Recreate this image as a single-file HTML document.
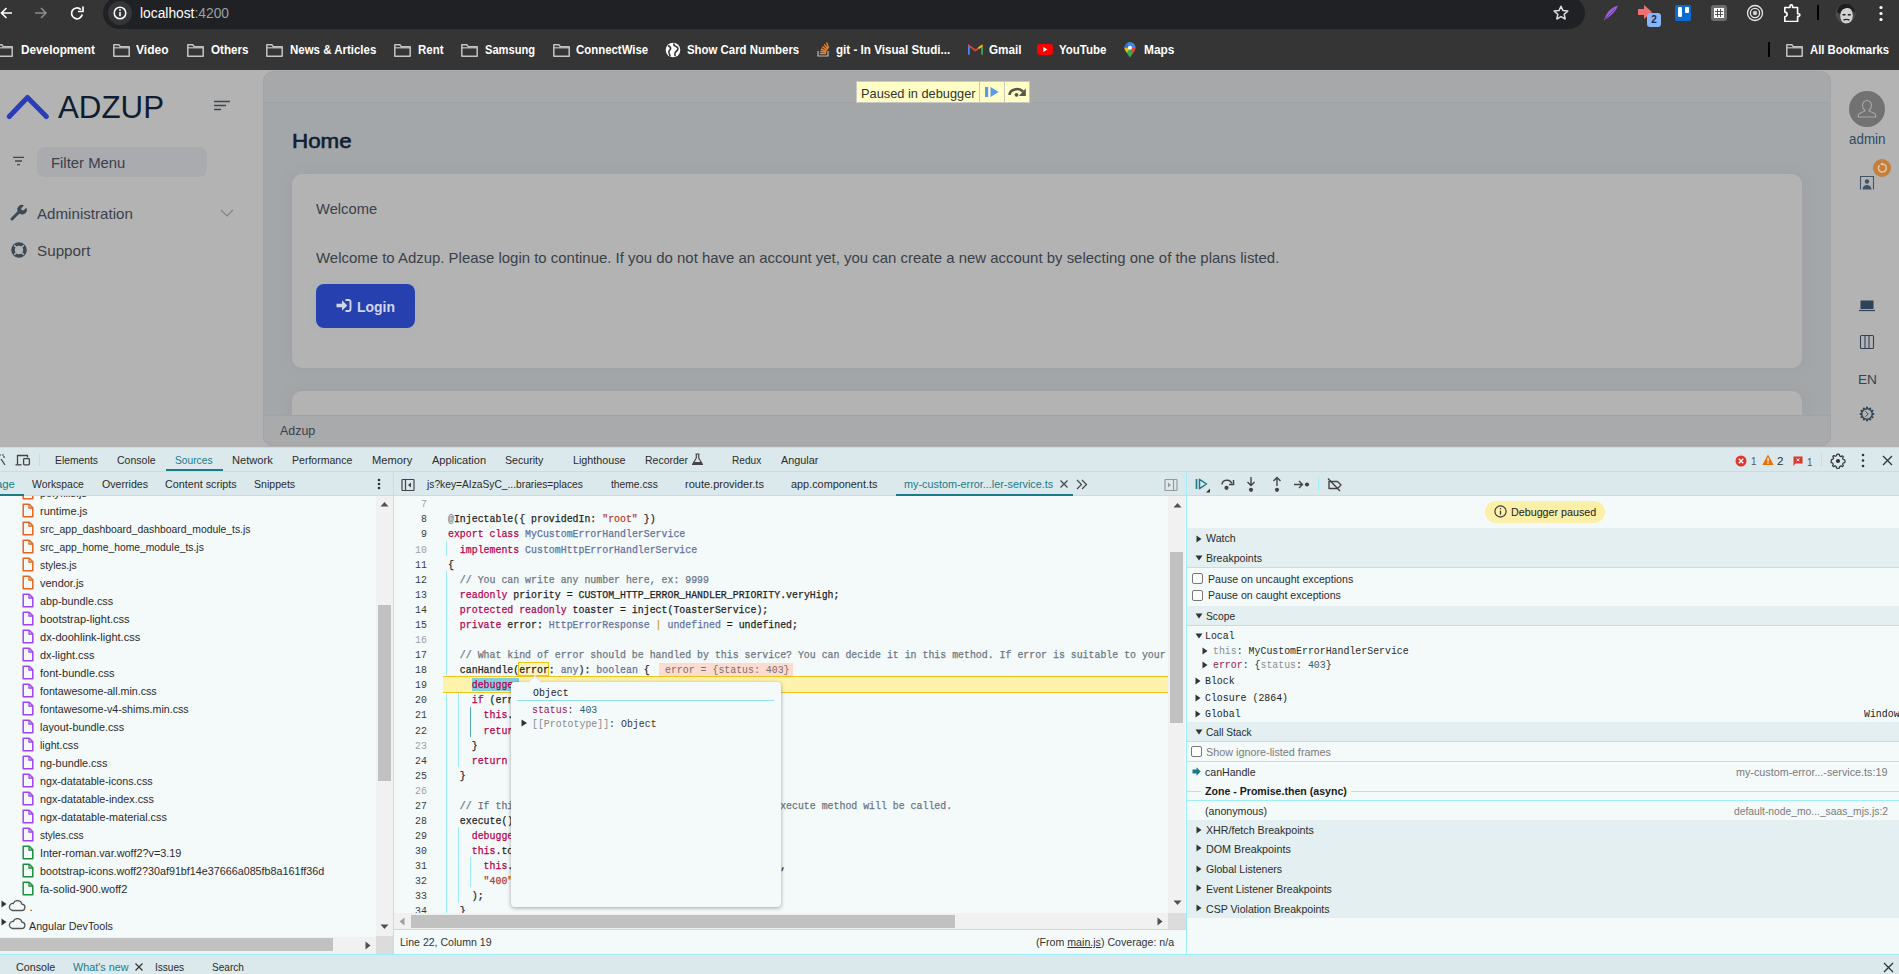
<!DOCTYPE html>
<html><head><meta charset="utf-8">
<style>
*{box-sizing:border-box;margin:0;padding:0}
html,body{width:1899px;height:974px;overflow:hidden;background:#353535;font-family:"Liberation Sans",sans-serif;position:relative}
.a{position:absolute}
.t{position:absolute;white-space:nowrap;line-height:1}
</style></head>
<body>
<div id="chrome" class="a">
<svg class="a" style="left:0px;top:6px" width="14" height="14" viewBox="0 0 14 14"><path d="M12 7H1.5M6.5 2L1.5 7l5 5" stroke="#fff" stroke-width="1.6" fill="none"/></svg>
<svg class="a" style="left:34px;top:6px" width="14" height="14" viewBox="0 0 14 14"><path d="M1 7h10.5M7 2l5 5-5 5" stroke="#8a8a8a" stroke-width="1.6" fill="none"/></svg>
<svg class="a" style="left:70px;top:5px" width="15" height="16" viewBox="0 0 15 16"><path d="M12.2 9.5A5.4 5.4 0 1 1 10.8 4.6" stroke="#fff" stroke-width="1.7" fill="none"/><path d="M13 1.5v5h-5" stroke="#fff" stroke-width="1.7" fill="none"/></svg>
<div class="a" style="left:103px;top:-3px;width:1482px;height:32px;background:#202124;border-radius:16px"></div>
<div class="a" style="left:108px;top:1px;width:24px;height:24px;border-radius:12px;background:#353638"></div>
<svg class="a" style="left:113px;top:6px" width="14" height="14" viewBox="0 0 14 14"><circle cx="7" cy="7" r="5.8" stroke="#fff" stroke-width="1.5" fill="none"/><path d="M7 6v4.2" stroke="#fff" stroke-width="1.6"/><circle cx="7" cy="4" r="0.9" fill="#fff"/></svg>
<div class="t" style="left:139.5px;top:6.0px;font-size:14px;color:#fff;transform:scaleX(0.9855);transform-origin:0 0">localhost<span style="color:#9aa0a6">:4200</span></div>
<svg class="a" style="left:1552px;top:4px" width="18" height="18" viewBox="0 0 18 18"><path d="M9 2.2l2 4.4 4.8.5-3.6 3.2 1 4.7L9 12.6 4.8 15l1-4.7L2.2 7.1 7 6.6z" stroke="#ddd" stroke-width="1.5" fill="none" stroke-linejoin="round"/></svg>
<svg class="a" style="left:1603px;top:5px" width="16" height="16" viewBox="0 0 16 16"><path d="M15 0.5C10 2 4 5 1 15.5 5 12 12 9 15 0.5z" fill="#9b5fd8"/><path d="M2 14L12 4" stroke="#6a3aa8" stroke-width="1"/></svg>
<svg class="a" style="left:1638px;top:5px" width="16" height="14" viewBox="0 0 16 14"><path d="M0 4h6V0l8 7-8 7V10H0z" fill="#f07070"/></svg>
<div class="a" style="left:1647px;top:13px;width:14px;height:14px;border-radius:3px;background:#8ab4f8;color:#1c2a4a;font-size:10px;font-weight:bold;text-align:center;line-height:14px">2</div>
<div class="a" style="left:1675px;top:5px;width:16px;height:16px;background:#0b6bd3;border-radius:2px"></div>
<div class="a" style="left:1678px;top:7px;width:4px;height:10px;background:#fff;border-radius:1px"></div>
<div class="a" style="left:1685px;top:7px;width:4px;height:6px;background:#fff;border-radius:1px"></div>
<div class="a" style="left:1711px;top:5px;width:16px;height:16px;background:#6e6e6e;border-radius:3px"></div>
<svg class="a" style="left:1713px;top:7px" width="12" height="12" viewBox="0 0 12 12"><rect x="1" y="1" width="10" height="10" fill="#fff"/><path d="M4.5 2v8M7.5 2v8M2 4.5h8M2 7.5h8" stroke="#555" stroke-width="1"/></svg>
<svg class="a" style="left:1746px;top:4px" width="18" height="18" viewBox="0 0 18 18"><circle cx="9" cy="9" r="7.5" stroke="#e8e8e8" stroke-width="1.3" fill="none"/><circle cx="9" cy="9" r="4.6" stroke="#e8e8e8" stroke-width="1.3" fill="none"/><circle cx="9" cy="9" r="2.2" fill="#cfcfcf"/></svg>
<svg class="a" style="left:1783px;top:3px" width="18" height="19" viewBox="0 0 18 19"><path d="M1.8 4.5h5.2V3.2a1.3 1.3 0 0 1 2.6 0V4.5h5v6.3h1a1.3 1.3 0 0 1 0 2.6h-1v5.1H1.8v-4.8a2.3 2.3 0 0 0 0-4.6z" stroke="#fff" stroke-width="1.6" fill="none" stroke-linejoin="round"/></svg>
<div class="a" style="left:1817px;top:5px;width:2px;height:15px;background:#000"></div>
<svg class="a" style="left:1835px;top:3px" width="21" height="21" viewBox="0 0 21 21"><clipPath id="av"><circle cx="10.5" cy="10.5" r="10"/></clipPath><g clip-path="url(#av)"><rect width="21" height="21" fill="#4a4a4a"/><ellipse cx="11.5" cy="12.5" rx="6.3" ry="8.5" fill="#d2d2d2"/><path d="M2 9C3 2 8 0 12 0.5s8 3 8 9l-2.5-1.5C16 5 13 4.5 10 5.5S6 8 5 11z" fill="#1e1e1e"/><path d="M7.5 11.8h3M12.8 11.8h3" stroke="#222" stroke-width="1.5"/><path d="M8.5 17.2c1.5-1 4.5-1 6 0" stroke="#2a2a2a" stroke-width="1.6" fill="none"/><path d="M2 2.5A10 10 0 0 0 3 18" stroke="#777" stroke-width="1.2" fill="none"/></g></svg>
<svg class="a" style="left:1877px;top:5px" width="8" height="17" viewBox="0 0 8 17"><circle cx="4" cy="2.5" r="1.6" fill="#fff"/><circle cx="4" cy="8.5" r="1.6" fill="#fff"/><circle cx="4" cy="14.5" r="1.6" fill="#fff"/></svg>
<svg class="a" style="left:-4px;top:44px" width="17" height="13" viewBox="0 0 17 13"><path d="M0.8 0.8h5l1.6 2h8.8v9.4H0.8z" stroke="#c4c4c4" stroke-width="1.5" fill="none" stroke-linejoin="round"/><path d="M0.8 3.8h15.4" stroke="#c4c4c4" stroke-width="1.2"/></svg>
<div class="t" style="left:20.6px;top:44.0px;font-size:12.5px;color:#fff;font-weight:bold;transform:scaleX(0.9427);transform-origin:0 0">Development</div>
<svg class="a" style="left:113px;top:44px" width="17" height="13" viewBox="0 0 17 13"><path d="M0.8 0.8h5l1.6 2h8.8v9.4H0.8z" stroke="#c4c4c4" stroke-width="1.5" fill="none" stroke-linejoin="round"/><path d="M0.8 3.8h15.4" stroke="#c4c4c4" stroke-width="1.2"/></svg>
<div class="t" style="left:136.4px;top:44.0px;font-size:12.5px;color:#fff;font-weight:bold;transform:scaleX(0.9641);transform-origin:0 0">Video</div>
<svg class="a" style="left:187px;top:44px" width="17" height="13" viewBox="0 0 17 13"><path d="M0.8 0.8h5l1.6 2h8.8v9.4H0.8z" stroke="#c4c4c4" stroke-width="1.5" fill="none" stroke-linejoin="round"/><path d="M0.8 3.8h15.4" stroke="#c4c4c4" stroke-width="1.2"/></svg>
<div class="t" style="left:210.5px;top:44.0px;font-size:12.5px;color:#fff;font-weight:bold;transform:scaleX(0.9306);transform-origin:0 0">Others</div>
<svg class="a" style="left:266px;top:44px" width="17" height="13" viewBox="0 0 17 13"><path d="M0.8 0.8h5l1.6 2h8.8v9.4H0.8z" stroke="#c4c4c4" stroke-width="1.5" fill="none" stroke-linejoin="round"/><path d="M0.8 3.8h15.4" stroke="#c4c4c4" stroke-width="1.2"/></svg>
<div class="t" style="left:289.7px;top:44.0px;font-size:12.5px;color:#fff;font-weight:bold;transform:scaleX(0.9178);transform-origin:0 0">News &amp; Articles</div>
<svg class="a" style="left:394px;top:44px" width="17" height="13" viewBox="0 0 17 13"><path d="M0.8 0.8h5l1.6 2h8.8v9.4H0.8z" stroke="#c4c4c4" stroke-width="1.5" fill="none" stroke-linejoin="round"/><path d="M0.8 3.8h15.4" stroke="#c4c4c4" stroke-width="1.2"/></svg>
<div class="t" style="left:417.8px;top:44.0px;font-size:12.5px;color:#fff;font-weight:bold;transform:scaleX(0.9179);transform-origin:0 0">Rent</div>
<svg class="a" style="left:461px;top:44px" width="17" height="13" viewBox="0 0 17 13"><path d="M0.8 0.8h5l1.6 2h8.8v9.4H0.8z" stroke="#c4c4c4" stroke-width="1.5" fill="none" stroke-linejoin="round"/><path d="M0.8 3.8h15.4" stroke="#c4c4c4" stroke-width="1.2"/></svg>
<div class="t" style="left:484.8px;top:44.0px;font-size:12.5px;color:#fff;font-weight:bold;transform:scaleX(0.8904);transform-origin:0 0">Samsung</div>
<svg class="a" style="left:553px;top:44px" width="17" height="13" viewBox="0 0 17 13"><path d="M0.8 0.8h5l1.6 2h8.8v9.4H0.8z" stroke="#c4c4c4" stroke-width="1.5" fill="none" stroke-linejoin="round"/><path d="M0.8 3.8h15.4" stroke="#c4c4c4" stroke-width="1.2"/></svg>
<div class="t" style="left:576.4px;top:44.0px;font-size:12.5px;color:#fff;font-weight:bold;transform:scaleX(0.9130);transform-origin:0 0">ConnectWise</div>
<svg class="a" style="left:665px;top:42px" width="16" height="16" viewBox="0 0 16 16"><circle cx="8" cy="8" r="7.3" fill="#fff"/><path d="M3 3.5c2 1 3 2 2.5 3.5S3 9 4 11s1 2.5 1 3.5M9 1.5c-.5 1.5.5 2.5 2 3s2.5 2 1.5 3.5-2 1.5-2.5 3 0 2.5.5 3" stroke="#353535" stroke-width="1.6" fill="none"/></svg>
<div class="t" style="left:686.9px;top:44.0px;font-size:12.5px;color:#fff;font-weight:bold;transform:scaleX(0.9127);transform-origin:0 0">Show Card Numbers</div>
<svg class="a" style="left:817px;top:42px" width="13" height="15" viewBox="0 0 13 15"><path d="M1 9v5h10V9" stroke="#bbb" stroke-width="1.2" fill="none"/><path d="M3 11.5h6M3.3 9.3l6 .8M4 7l5.6 2.2M5.3 4.6l5 3.4M7.2 2.4l3.8 4.6M9.6 0.6l2 5.4" stroke="#f48024" stroke-width="1.4"/></svg>
<div class="t" style="left:836.4px;top:44.0px;font-size:12.5px;color:#fff;font-weight:bold;transform:scaleX(0.9315);transform-origin:0 0">git - In Visual Studi...</div>
<svg class="a" style="left:968px;top:44px" width="15" height="11" viewBox="0 0 15 11"><path d="M0.8 10.5V1.5L7.5 6.5 14.2 1.5v9" stroke="#ea4335" stroke-width="1.6" fill="none"/><path d="M0.8 10.5V2" stroke="#4285f4" stroke-width="1.8"/><path d="M14.2 10.5V2" stroke="#34a853" stroke-width="1.8"/><path d="M10.5 4.3l3.7-2.8" stroke="#fbbc04" stroke-width="1.8"/></svg>
<div class="t" style="left:988.5px;top:44.0px;font-size:12.5px;color:#fff;font-weight:bold;transform:scaleX(0.9353);transform-origin:0 0">Gmail</div>
<svg class="a" style="left:1037px;top:44px" width="16" height="11" viewBox="0 0 16 11"><rect x="0" y="0" width="16" height="11" rx="3" fill="#f00"/><path d="M6.3 3v5l4.2-2.5z" fill="#fff"/></svg>
<div class="t" style="left:1058.5px;top:44.0px;font-size:12.5px;color:#fff;font-weight:bold;transform:scaleX(0.9201);transform-origin:0 0">YouTube</div>
<svg class="a" style="left:1124px;top:42px" width="12" height="16" viewBox="0 0 12 16"><path d="M6 15.5C3 11 0.5 8.5 0.5 5.7A5.5 5.5 0 0 1 11.5 5.7C11.5 8.5 9 11 6 15.5z" fill="#34a853"/><path d="M0.5 5.7A5.5 5.5 0 0 1 3 1.2L6 5.7z" fill="#1a73e8"/><path d="M3 1.2A5.5 5.5 0 0 1 11.5 5.7L6 5.7z" fill="#4285f4"/><path d="M0.5 5.7C0.5 7.5 1.5 9 3 10.5L6 5.7z" fill="#fbbc04"/><path d="M11.5 5.7c0 2-1.5 3.7-3 5.5L6 5.7z" fill="#ea4335"/><circle cx="6" cy="5.7" r="2" fill="#fff"/></svg>
<div class="t" style="left:1143.8px;top:44.0px;font-size:12.5px;color:#fff;font-weight:bold;transform:scaleX(0.9514);transform-origin:0 0">Maps</div>
<svg class="a" style="left:1786px;top:44px" width="17" height="13" viewBox="0 0 17 13"><path d="M0.8 0.8h5l1.6 2h8.8v9.4H0.8z" stroke="#c4c4c4" stroke-width="1.5" fill="none" stroke-linejoin="round"/><path d="M0.8 3.8h15.4" stroke="#c4c4c4" stroke-width="1.2"/></svg>
<div class="t" style="left:1809.9px;top:44.0px;font-size:12.5px;color:#fff;font-weight:bold;transform:scaleX(0.9037);transform-origin:0 0">All Bookmarks</div>
<div class="a" style="left:1768px;top:42px;width:2px;height:15px;background:#000"></div>
</div>
<div class="a" style="left:0px;top:70px;width:1899px;height:377px;background:#b3b3b3"></div>
<div class="a" style="left:263px;top:71px;width:1568px;height:375px;background:#a4a7a9;border-radius:10px;overflow:hidden;border:1px solid #a1a4a8"><div class="a" style="left:0px;top:0px;width:1568px;height:30px;background:#a7a8aa"></div>
<div class="a" style="left:0px;top:30px;width:1568px;height:1px;background:#a0a2a7"></div>
</div>
<div class="t" style="left:292.2px;top:130.6px;font-size:20.8px;color:#0f1e30;transform:scaleX(1.0742);transform-origin:0 0;-webkit-text-stroke:0.6px #0f1e30">Home</div>
<div class="a" style="left:292px;top:174px;width:1510px;height:194px;background:#b3b3b3;border-radius:10px;box-shadow:0 0 10px 2px rgba(158,161,164,0.9)"></div>
<div class="a" style="left:292px;top:391px;width:1510px;height:40px;background:#b3b3b3;border-radius:10px;box-shadow:0 0 10px 2px rgba(158,161,164,0.9)"></div>
<div class="a" style="left:263px;top:415px;width:1568px;height:31px;background:#a8aaac;border:1px solid #a1a4a8;border-top-color:#a0a2a6;border-radius:0 0 10px 10px"></div>
<div class="t" style="left:315.6px;top:202.2px;font-size:14.5px;color:#3a4149;transform:scaleX(1.0154);transform-origin:0 0">Welcome</div>
<div class="t" style="left:315.6px;top:251.3px;font-size:14.5px;color:#3a4149;transform:scaleX(1.0305);transform-origin:0 0">Welcome to Adzup. Please login to continue. If you do not have an account yet, you can create a new account by selecting one of the plans listed.</div>
<div class="a" style="left:316px;top:284px;width:99px;height:44px;background:#2640b0;border-radius:8px;box-shadow:0 0 0 6px rgba(175,177,179,0.6)"></div>
<svg class="a" style="left:336px;top:299px" width="16" height="13" viewBox="0 0 16 13"><path d="M0.5 4.7h5.5V1.2l5.3 5.3-5.3 5.3V8.3H0.5z" fill="#d2d6ea"/><path d="M9.5 1h3.2a1.8 1.8 0 0 1 1.8 1.8v7.4a1.8 1.8 0 0 1-1.8 1.8H9.5" stroke="#d2d6ea" stroke-width="1.9" fill="none"/></svg>
<div class="t" style="left:356.7px;top:298.8px;font-size:15px;color:#d2d6ea;font-weight:bold;transform:scaleX(0.9283);transform-origin:0 0">Login</div>
<div class="t" style="left:279.9px;top:424.3px;font-size:13px;color:#3a4149;transform:scaleX(0.9546);transform-origin:0 0">Adzup</div>
<svg class="a" style="left:6px;top:94px" width="44" height="27" viewBox="0 0 44 27"><path d="M3.3 22.5L21.5 3.5 40.3 22.5" stroke="#2b3cba" stroke-width="5" fill="none" stroke-linecap="round" stroke-linejoin="round"/></svg>
<div class="t" style="left:57.5px;top:92.0px;font-size:31.6px;color:#0e1d30;transform:scaleX(0.9899);transform-origin:0 0">ADZUP</div>
<svg class="a" style="left:213px;top:100px" width="18" height="12" viewBox="0 0 18 12"><path d="M1 1.5h16M1 5.5h12M1 9.5h7" stroke="#3d4750" stroke-width="1.6"/></svg>
<svg class="a" style="left:12px;top:156px" width="13" height="10" viewBox="0 0 13 10"><path d="M1 1.3h11M3 5h7M5 8.7h3" stroke="#3d4750" stroke-width="1.3"/></svg>
<div class="a" style="left:37px;top:147px;width:169.5px;height:29.5px;background:#a9abae;border-radius:8px"></div>
<div class="t" style="left:50.9px;top:155.9px;font-size:14.5px;color:#3a4149;transform:scaleX(1.0244);transform-origin:0 0">Filter Menu</div>
<svg class="a" style="left:10px;top:204px" width="17" height="17" viewBox="0 0 17 17"><path d="M2 15l6.5-6.5" stroke="#3d4a56" stroke-width="3" stroke-linecap="round"/><path d="M8.5 8.5a4.5 4.5 0 0 1 5.5-7l-2.8 2.8.4 1.8 1.8.4L16.2 3.7a4.5 4.5 0 0 1-7 5.5z" fill="#3d4a56"/></svg>
<div class="t" style="left:37.1px;top:207.3px;font-size:14.5px;color:#3a4149;transform:scaleX(1.0438);transform-origin:0 0">Administration</div>
<svg class="a" style="left:220px;top:209px" width="14" height="8" viewBox="0 0 14 8"><path d="M1 1l6 6 6-6" stroke="#7d8790" stroke-width="1.2" fill="none"/></svg>
<svg class="a" style="left:11px;top:242px" width="16" height="16" viewBox="0 0 16 16"><circle cx="8" cy="8" r="6" stroke="#3d4a56" stroke-width="3.6" fill="none"/><path d="M3.2 3.2l2.6 2.6M12.8 3.2l-2.6 2.6M3.2 12.8l2.6-2.6M12.8 12.8l-2.6-2.6" stroke="#b3b3b3" stroke-width="1.6"/></svg>
<div class="t" style="left:37.1px;top:244.2px;font-size:14.5px;color:#3a4149;transform:scaleX(1.0512);transform-origin:0 0">Support</div>
<div class="a" style="left:1849px;top:91px;width:36px;height:36px;background:#727272;border-radius:50%"></div>
<svg class="a" style="left:1855px;top:97px" width="24" height="24" viewBox="0 0 24 24"><path d="M12 3.5a4.5 5 0 0 1 4.5 5c0 2.2-1.2 4-2.5 4.8v.7l5.5 2.5a2 2 0 0 1 1.2 1.8V20H3.3v-1.7a2 2 0 0 1 1.2-1.8L10 14v-.7C8.7 12.5 7.5 10.7 7.5 8.5a4.5 5 0 0 1 4.5-5z" stroke="#a8a8a8" stroke-width="1.1" fill="none"/></svg>
<div class="t" style="left:1849.0px;top:132.4px;font-size:14px;color:#2f4a63;transform:scaleX(0.9570);transform-origin:0 0">admin</div>
<svg class="a" style="left:1858px;top:175px" width="18" height="16" viewBox="0 0 18 16"><path d="M2.5 14.5V1.5h13v13" stroke="#3f5466" stroke-width="1.1" fill="none"/><circle cx="9" cy="6.5" r="2.2" fill="#3f5466"/><path d="M4.5 14.5c0-3 2-4.5 4.5-4.5s4.5 1.5 4.5 4.5z" fill="#3f5466"/></svg>
<div class="a" style="left:1873px;top:159px;width:18px;height:18px;background:#c47f3a;border-radius:50%"></div>
<svg class="a" style="left:1876px;top:162px" width="12" height="12" viewBox="0 0 12 12"><path d="M3.5 3.2A4 4 0 1 0 6 2" stroke="#e8c8a8" stroke-width="1.4" fill="none"/><path d="M6.5 0.3L4.2 2.2 6.5 3.8" fill="#e8c8a8"/></svg>
<svg class="a" style="left:1859px;top:300px" width="16" height="12" viewBox="0 0 16 12"><rect x="1.5" y="0.5" width="13" height="8.5" fill="#2f4357"/><path d="M0 10.5h16" stroke="#2f4357" stroke-width="1.2"/></svg>
<svg class="a" style="left:1859px;top:334px" width="16" height="16" viewBox="0 0 16 16"><rect x="1.5" y="1.5" width="13" height="13" rx="1" stroke="#2f4357" stroke-width="1.1" fill="none"/><path d="M6 1.5v13M10 1.5v13" stroke="#2f4357" stroke-width="1.1"/></svg>
<div class="t" style="left:1857.5px;top:372.8px;font-size:13px;color:#2f4357;transform:scaleX(1.0519);transform-origin:0 0">EN</div>
<svg class="a" style="left:1859px;top:406px" width="16" height="16" viewBox="0 0 16 16"><circle cx="8" cy="8" r="5.3" stroke="#2f4357" stroke-width="1.5" fill="none"/><circle cx="14.40" cy="8.00" r="1.05" fill="#2f4357"/><circle cx="13.54" cy="11.20" r="1.05" fill="#2f4357"/><circle cx="11.20" cy="13.54" r="1.05" fill="#2f4357"/><circle cx="8.00" cy="14.40" r="1.05" fill="#2f4357"/><circle cx="4.80" cy="13.54" r="1.05" fill="#2f4357"/><circle cx="2.46" cy="11.20" r="1.05" fill="#2f4357"/><circle cx="1.60" cy="8.00" r="1.05" fill="#2f4357"/><circle cx="2.46" cy="4.80" r="1.05" fill="#2f4357"/><circle cx="4.80" cy="2.46" r="1.05" fill="#2f4357"/><circle cx="8.00" cy="1.60" r="1.05" fill="#2f4357"/><circle cx="11.20" cy="2.46" r="1.05" fill="#2f4357"/><circle cx="13.54" cy="4.80" r="1.05" fill="#2f4357"/><path d="M6.3 5.3L9.3 8 6.3 10.7" stroke="#2f4357" stroke-width="0.9" fill="none"/></svg>
<div class="a" style="left:856px;top:81px;width:174px;height:22px;background:#ffffc6;border:1px solid #c9c9c4"></div>
<div class="t" style="left:861.0px;top:86.8px;font-size:13px;color:#333;transform:scaleX(0.9839);transform-origin:0 0">Paused in debugger</div>
<div class="a" style="left:979px;top:82px;width:1px;height:20px;background:#c9c9c4"></div>
<div class="a" style="left:1004px;top:82px;width:1px;height:20px;background:#c9c9c4"></div>
<svg class="a" style="left:985px;top:86px" width="15" height="12" viewBox="0 0 15 12"><path d="M1.6 1v10" stroke="#5a9be8" stroke-width="3.2"/><path d="M5.5 1v10l8.3-5z" fill="#5a9be8"/></svg>
<svg class="a" style="left:1007px;top:86px" width="20" height="12" viewBox="0 0 20 12"><path d="M2.5 9A7.5 6 0 0 1 16 5.5" stroke="#56564a" stroke-width="2.6" fill="none"/><path d="M18.8 2.5v7.5h-7z" fill="#56564a"/><circle cx="9.5" cy="8.8" r="1.9" fill="#56564a"/></svg>
<div class="a" style="left:0px;top:447px;width:1899px;height:527px;background:#f4fafa"></div>
<div class="a" style="left:0px;top:447px;width:1899px;height:1px;background:#9eeefa"></div>
<div class="a" style="left:0px;top:448px;width:1899px;height:23px;background:#dbe9ec"></div>
<div class="a" style="left:0px;top:471px;width:1899px;height:1px;background:#9eeefa"></div>
<div class="a" style="left:0px;top:472px;width:1899px;height:23px;background:#dbe9ec"></div>
<div class="a" style="left:0px;top:495px;width:1899px;height:1px;background:#9eeefa"></div>
<svg class="a" style="left:0px;top:454px" width="6" height="12" viewBox="0 0 6 12"><path d="M-4 1h8v4M-4 1v9h4" stroke="#444" stroke-width="1.2" fill="none" stroke-dasharray="2 1"/><path d="M1 5l4 6" stroke="#444" stroke-width="1.3"/></svg>
<svg class="a" style="left:15px;top:454px" width="16" height="12" viewBox="0 0 16 12"><path d="M2.5 10.5V1.5h10v2" stroke="#444" stroke-width="1.3" fill="none"/><path d="M0.5 10.8h6" stroke="#444" stroke-width="1.3"/><rect x="8.6" y="4.6" width="5.8" height="6.3" rx="0.8" stroke="#444" stroke-width="1.3" fill="none"/></svg>
<div class="a" style="left:39px;top:453px;width:1px;height:13px;background:#9eeefa"></div>
<div class="t" style="left:54.8px;top:455.0px;font-size:11px;color:#2b2b2b;transform:scaleX(0.9376);transform-origin:0 0">Elements</div>
<div class="t" style="left:117.4px;top:455.0px;font-size:11px;color:#2b2b2b;transform:scaleX(0.9564);transform-origin:0 0">Console</div>
<div class="t" style="left:174.9px;top:455.0px;font-size:11px;color:#1b7b89;transform:scaleX(0.9292);transform-origin:0 0">Sources</div>
<div class="t" style="left:231.8px;top:455.0px;font-size:11px;color:#2b2b2b;transform:scaleX(1.0113);transform-origin:0 0">Network</div>
<div class="t" style="left:291.9px;top:455.0px;font-size:11px;color:#2b2b2b;transform:scaleX(0.9574);transform-origin:0 0">Performance</div>
<div class="t" style="left:372.2px;top:455.0px;font-size:11px;color:#2b2b2b;transform:scaleX(1.0117);transform-origin:0 0">Memory</div>
<div class="t" style="left:431.6px;top:455.0px;font-size:11px;color:#2b2b2b;transform:scaleX(1.0051);transform-origin:0 0">Application</div>
<div class="t" style="left:505.2px;top:455.0px;font-size:11px;color:#2b2b2b;transform:scaleX(0.9660);transform-origin:0 0">Security</div>
<div class="t" style="left:573.1px;top:455.0px;font-size:11px;color:#2b2b2b;transform:scaleX(0.9772);transform-origin:0 0">Lighthouse</div>
<div class="t" style="left:645.0px;top:455.0px;font-size:11px;color:#2b2b2b;transform:scaleX(0.9525);transform-origin:0 0">Recorder</div>
<div class="t" style="left:732.4px;top:455.0px;font-size:11px;color:#2b2b2b;transform:scaleX(0.9215);transform-origin:0 0">Redux</div>
<div class="t" style="left:781.1px;top:455.0px;font-size:11px;color:#2b2b2b;transform:scaleX(0.9862);transform-origin:0 0">Angular</div>
<div class="a" style="left:166px;top:469px;width:57px;height:2px;background:#1b7b89"></div>
<svg class="a" style="left:691px;top:453px" width="13" height="13" viewBox="0 0 13 13"><path d="M4.5 1h4M5.3 1v4L1.5 11.5h10L7.7 5V1" stroke="#444" stroke-width="1.2" fill="none" stroke-linejoin="round"/><path d="M3 9h7l1.5 2.5h-10z" fill="#444"/></svg>
<svg class="a" style="left:1735px;top:455px" width="12" height="12" viewBox="0 0 12 12"><circle cx="6" cy="6" r="5.5" fill="#dc362e"/><path d="M3.8 3.8l4.4 4.4M8.2 3.8L3.8 8.2" stroke="#fff" stroke-width="1.4"/></svg>
<div class="t" style="left:1750.5px;top:456.0px;font-size:11px;color:#555;transform:scaleX(0.8980);transform-origin:0 0">1</div>
<svg class="a" style="left:1762px;top:454px" width="12" height="12" viewBox="0 0 12 12"><path d="M6 0.5l5.7 10.5H0.3z" fill="#e8710a"/><path d="M6 4v3.5" stroke="#fff" stroke-width="1.3"/><circle cx="6" cy="9.1" r="0.75" fill="#fff"/></svg>
<div class="t" style="left:1776.5px;top:456.0px;font-size:11px;color:#333;transform:scaleX(1.0612);transform-origin:0 0">2</div>
<svg class="a" style="left:1793px;top:456px" width="10" height="11" viewBox="0 0 10 11"><path d="M0.5 0.5h9v7H2.5l-2 2.5z" fill="#dc362e"/><path d="M3.6 2.4l2.8 2.8M6.4 2.4L3.6 5.2" stroke="#fff" stroke-width="1"/></svg>
<div class="t" style="left:1806.5px;top:457.0px;font-size:11px;color:#555;transform:scaleX(0.8980);transform-origin:0 0">1</div>
<div class="a" style="left:1821px;top:453px;width:1px;height:14px;background:#9eeefa"></div>
<svg class="a" style="left:1830px;top:453px" width="16" height="16" viewBox="0 0 16 16"><path d="M8 1.2l1.3.2.4 1.6 1.2.6 1.5-.8 1 1-.8 1.5.6 1.2 1.6.4.2 1.4-.2 1.3-1.6.4-.6 1.2.8 1.5-1 1-1.5-.8-1.2.6-.4 1.6-1.3.2-1.4-.2-.4-1.6-1.2-.6-1.5.8-1-1 .8-1.5-.6-1.2-1.6-.4L1.2 8l.2-1.4 1.6-.4.6-1.2-.8-1.5 1-1 1.5.8 1.2-.6.4-1.6z" stroke="#333" stroke-width="1.2" fill="none" stroke-linejoin="round"/><circle cx="8" cy="8" r="2.1" fill="#333"/></svg>
<svg class="a" style="left:1860px;top:453px" width="6" height="15" viewBox="0 0 6 15"><circle cx="3" cy="2" r="1.3" fill="#333"/><circle cx="3" cy="7.5" r="1.3" fill="#333"/><circle cx="3" cy="13" r="1.3" fill="#333"/></svg>
<svg class="a" style="left:1881px;top:454px" width="13" height="13" viewBox="0 0 13 13"><path d="M2 2l9 9M11 2l-9 9" stroke="#333" stroke-width="1.3"/></svg>
<div class="t" style="left:-4.0px;top:478.8px;font-size:11px;color:#1b7b89;transform:scaleX(1.0294);transform-origin:0 0">age</div>
<div class="a" style="left:0px;top:494px;width:24px;height:2px;background:#1b7b89"></div>
<div class="t" style="left:32.2px;top:478.8px;font-size:11px;color:#2b2b2b;transform:scaleX(0.9466);transform-origin:0 0">Workspace</div>
<div class="t" style="left:101.9px;top:478.8px;font-size:11px;color:#2b2b2b;transform:scaleX(0.9667);transform-origin:0 0">Overrides</div>
<div class="t" style="left:165.0px;top:478.8px;font-size:11px;color:#2b2b2b;transform:scaleX(0.9772);transform-origin:0 0">Content scripts</div>
<div class="t" style="left:254.3px;top:478.8px;font-size:11px;color:#2b2b2b;transform:scaleX(0.9600);transform-origin:0 0">Snippets</div>
<svg class="a" style="left:376px;top:478px" width="6" height="12" viewBox="0 0 6 12"><circle cx="3" cy="2" r="1.3" fill="#333"/><circle cx="3" cy="6" r="1.3" fill="#333"/><circle cx="3" cy="10" r="1.3" fill="#333"/></svg>
<div class="a" style="left:393px;top:472px;width:1px;height:482px;background:#9eeefa"></div>
<div class="a" style="left:1186px;top:472px;width:1px;height:482px;background:#9eeefa"></div>
<svg class="a" style="left:401px;top:478px" width="14" height="14" viewBox="0 0 14 14"><rect x="1" y="1.5" width="12" height="11" rx="0.5" stroke="#444" stroke-width="1.2" fill="none"/><path d="M4.5 1.5v11" stroke="#444" stroke-width="1.2"/><path d="M10 4.5v5L7 7z" fill="#444"/></svg>
<div class="t" style="left:427.1px;top:479.0px;font-size:11px;color:#2b2b2b;transform:scaleX(0.9306);transform-origin:0 0">js?key=AIzaSyC_...braries=places</div>
<div class="t" style="left:610.7px;top:479.0px;font-size:11px;color:#2b2b2b;transform:scaleX(0.9334);transform-origin:0 0">theme.css</div>
<div class="t" style="left:684.8px;top:479.0px;font-size:11px;color:#2b2b2b;transform:scaleX(1.0003);transform-origin:0 0">route.provider.ts</div>
<div class="t" style="left:791.0px;top:479.0px;font-size:11px;color:#2b2b2b;transform:scaleX(0.9880);transform-origin:0 0">app.component.ts</div>
<div class="t" style="left:904.4px;top:479.0px;font-size:11px;color:#1b7b89;transform:scaleX(0.9843);transform-origin:0 0">my-custom-error...ler-service.ts</div>
<svg class="a" style="left:1059px;top:479px" width="10" height="10" viewBox="0 0 10 10"><path d="M1.5 1.5l7 7M8.5 1.5l-7 7" stroke="#444" stroke-width="1.2"/></svg>
<div class="a" style="left:896px;top:494px;width:177px;height:2px;background:#1b7b89"></div>
<svg class="a" style="left:1076px;top:479px" width="12" height="11" viewBox="0 0 12 11"><path d="M1 1l4.5 4.5L1 10M6 1l4.5 4.5L6 10" stroke="#444" stroke-width="1.2" fill="none"/></svg>
<svg class="a" style="left:1164px;top:478px" width="14" height="14" viewBox="0 0 14 14"><rect x="1" y="1.5" width="12" height="11" rx="0.5" stroke="#999" stroke-width="1.2" fill="none"/><path d="M9.5 1.5v11" stroke="#999" stroke-width="1.2"/><path d="M4 4.5v5L7 7z" fill="#999"/></svg>
<svg class="a" style="left:1194px;top:477px" width="18" height="16" viewBox="0 0 18 16"><path d="M2.5 2v10" stroke="#1b7b89" stroke-width="1.6"/><path d="M5.5 2.3v9.4L12.5 7z" stroke="#1b7b89" stroke-width="1.5" fill="none" stroke-linejoin="round"/><path d="M16 11.5v4h-4z" fill="#333"/></svg>
<svg class="a" style="left:1220px;top:477px" width="15" height="15" viewBox="0 0 15 15"><path d="M2 7.5a5 4.5 0 0 1 9.8-1" stroke="#444" stroke-width="1.5" fill="none"/><path d="M13.5 3v4.5H9" stroke="#444" stroke-width="1.5" fill="none"/><circle cx="6.5" cy="10.8" r="2.1" fill="#444"/></svg>
<svg class="a" style="left:1245px;top:476px" width="12" height="17" viewBox="0 0 12 17"><path d="M6 1v8M2.5 6l3.5 3.5L9.5 6" stroke="#444" stroke-width="1.4" fill="none"/><circle cx="6" cy="13.8" r="2.1" fill="#444"/></svg>
<svg class="a" style="left:1271px;top:476px" width="12" height="17" viewBox="0 0 12 17"><path d="M6 10V2M2.5 5L6 1.5 9.5 5" stroke="#444" stroke-width="1.4" fill="none"/><circle cx="6" cy="13.8" r="2.1" fill="#444"/></svg>
<svg class="a" style="left:1293px;top:479px" width="18" height="11" viewBox="0 0 18 11"><path d="M1 5.5h8M6 2l3.5 3.5L6 9" stroke="#444" stroke-width="1.4" fill="none"/><circle cx="14" cy="5.5" r="2.1" fill="#444"/></svg>
<div class="a" style="left:1318px;top:477px;width:1px;height:14px;background:#9eeefa"></div>
<svg class="a" style="left:1326px;top:477px" width="17" height="15" viewBox="0 0 17 15"><path d="M3 4.5h8.5l3.5 3.5-3.5 3.5H3z" stroke="#444" stroke-width="1.4" fill="none" stroke-linejoin="round"/><path d="M2 1.5l12 12.5" stroke="#444" stroke-width="1.4"/></svg>
<div class="a" style="left:0;top:496px;width:393px;height:441px;overflow:hidden">
<div class="a" style="left:0;top:-496px;width:393px;height:974px">
<svg class="a" style="left:22px;top:485px" width="12" height="15" viewBox="0 0 12 15"><path d="M1.2 1.2h6l3.6 3.6v9H1.2z" stroke="#e6661c" stroke-width="1.5" fill="none" stroke-linejoin="round"/><path d="M7 1.2v3.8h3.8" stroke="#e6661c" stroke-width="1.3" fill="none"/></svg>
<div class="t" style="left:39.9px;top:488.0px;font-size:11px;color:#2b2b2b">polyfills.js</div>
<svg class="a" style="left:22px;top:503px" width="12" height="15" viewBox="0 0 12 15"><path d="M1.2 1.2h6l3.6 3.6v9H1.2z" stroke="#e6661c" stroke-width="1.5" fill="none" stroke-linejoin="round"/><path d="M7 1.2v3.8h3.8" stroke="#e6661c" stroke-width="1.3" fill="none"/></svg>
<div class="t" style="left:39.9px;top:506.0px;font-size:11px;color:#2b2b2b;transform:scaleX(0.9961);transform-origin:0 0">runtime.js</div>
<svg class="a" style="left:22px;top:521px" width="12" height="15" viewBox="0 0 12 15"><path d="M1.2 1.2h6l3.6 3.6v9H1.2z" stroke="#e6661c" stroke-width="1.5" fill="none" stroke-linejoin="round"/><path d="M7 1.2v3.8h3.8" stroke="#e6661c" stroke-width="1.3" fill="none"/></svg>
<div class="t" style="left:39.9px;top:524.0px;font-size:11px;color:#2b2b2b;transform:scaleX(0.9430);transform-origin:0 0">src_app_dashboard_dashboard_module_ts.js</div>
<svg class="a" style="left:22px;top:539px" width="12" height="15" viewBox="0 0 12 15"><path d="M1.2 1.2h6l3.6 3.6v9H1.2z" stroke="#e6661c" stroke-width="1.5" fill="none" stroke-linejoin="round"/><path d="M7 1.2v3.8h3.8" stroke="#e6661c" stroke-width="1.3" fill="none"/></svg>
<div class="t" style="left:39.9px;top:542.0px;font-size:11px;color:#2b2b2b;transform:scaleX(0.9399);transform-origin:0 0">src_app_home_home_module_ts.js</div>
<svg class="a" style="left:22px;top:557px" width="12" height="15" viewBox="0 0 12 15"><path d="M1.2 1.2h6l3.6 3.6v9H1.2z" stroke="#e6661c" stroke-width="1.5" fill="none" stroke-linejoin="round"/><path d="M7 1.2v3.8h3.8" stroke="#e6661c" stroke-width="1.3" fill="none"/></svg>
<div class="t" style="left:39.9px;top:560.0px;font-size:11px;color:#2b2b2b;transform:scaleX(0.9355);transform-origin:0 0">styles.js</div>
<svg class="a" style="left:22px;top:575px" width="12" height="15" viewBox="0 0 12 15"><path d="M1.2 1.2h6l3.6 3.6v9H1.2z" stroke="#e6661c" stroke-width="1.5" fill="none" stroke-linejoin="round"/><path d="M7 1.2v3.8h3.8" stroke="#e6661c" stroke-width="1.3" fill="none"/></svg>
<div class="t" style="left:39.9px;top:578.0px;font-size:11px;color:#2b2b2b;transform:scaleX(0.9947);transform-origin:0 0">vendor.js</div>
<svg class="a" style="left:22px;top:593px" width="12" height="15" viewBox="0 0 12 15"><path d="M1.2 1.2h6l3.6 3.6v9H1.2z" stroke="#a142f4" stroke-width="1.5" fill="none" stroke-linejoin="round"/><path d="M7 1.2v3.8h3.8" stroke="#a142f4" stroke-width="1.3" fill="none"/></svg>
<div class="t" style="left:39.9px;top:596.0px;font-size:11px;color:#2b2b2b;transform:scaleX(0.9798);transform-origin:0 0">abp-bundle.css</div>
<svg class="a" style="left:22px;top:611px" width="12" height="15" viewBox="0 0 12 15"><path d="M1.2 1.2h6l3.6 3.6v9H1.2z" stroke="#a142f4" stroke-width="1.5" fill="none" stroke-linejoin="round"/><path d="M7 1.2v3.8h3.8" stroke="#a142f4" stroke-width="1.3" fill="none"/></svg>
<div class="t" style="left:39.9px;top:614.0px;font-size:11px;color:#2b2b2b;transform:scaleX(1.0037);transform-origin:0 0">bootstrap-light.css</div>
<svg class="a" style="left:22px;top:629px" width="12" height="15" viewBox="0 0 12 15"><path d="M1.2 1.2h6l3.6 3.6v9H1.2z" stroke="#a142f4" stroke-width="1.5" fill="none" stroke-linejoin="round"/><path d="M7 1.2v3.8h3.8" stroke="#a142f4" stroke-width="1.3" fill="none"/></svg>
<div class="t" style="left:39.9px;top:632.0px;font-size:11px;color:#2b2b2b;transform:scaleX(1.0065);transform-origin:0 0">dx-doohlink-light.css</div>
<svg class="a" style="left:22px;top:647px" width="12" height="15" viewBox="0 0 12 15"><path d="M1.2 1.2h6l3.6 3.6v9H1.2z" stroke="#a142f4" stroke-width="1.5" fill="none" stroke-linejoin="round"/><path d="M7 1.2v3.8h3.8" stroke="#a142f4" stroke-width="1.3" fill="none"/></svg>
<div class="t" style="left:39.9px;top:650.0px;font-size:11px;color:#2b2b2b;transform:scaleX(0.9885);transform-origin:0 0">dx-light.css</div>
<svg class="a" style="left:22px;top:665px" width="12" height="15" viewBox="0 0 12 15"><path d="M1.2 1.2h6l3.6 3.6v9H1.2z" stroke="#a142f4" stroke-width="1.5" fill="none" stroke-linejoin="round"/><path d="M7 1.2v3.8h3.8" stroke="#a142f4" stroke-width="1.3" fill="none"/></svg>
<div class="t" style="left:39.9px;top:668.0px;font-size:11px;color:#2b2b2b;transform:scaleX(0.9999);transform-origin:0 0">font-bundle.css</div>
<svg class="a" style="left:22px;top:683px" width="12" height="15" viewBox="0 0 12 15"><path d="M1.2 1.2h6l3.6 3.6v9H1.2z" stroke="#a142f4" stroke-width="1.5" fill="none" stroke-linejoin="round"/><path d="M7 1.2v3.8h3.8" stroke="#a142f4" stroke-width="1.3" fill="none"/></svg>
<div class="t" style="left:39.9px;top:686.0px;font-size:11px;color:#2b2b2b;transform:scaleX(0.9690);transform-origin:0 0">fontawesome-all.min.css</div>
<svg class="a" style="left:22px;top:701px" width="12" height="15" viewBox="0 0 12 15"><path d="M1.2 1.2h6l3.6 3.6v9H1.2z" stroke="#a142f4" stroke-width="1.5" fill="none" stroke-linejoin="round"/><path d="M7 1.2v3.8h3.8" stroke="#a142f4" stroke-width="1.3" fill="none"/></svg>
<div class="t" style="left:39.9px;top:704.0px;font-size:11px;color:#2b2b2b;transform:scaleX(0.9691);transform-origin:0 0">fontawesome-v4-shims.min.css</div>
<svg class="a" style="left:22px;top:719px" width="12" height="15" viewBox="0 0 12 15"><path d="M1.2 1.2h6l3.6 3.6v9H1.2z" stroke="#a142f4" stroke-width="1.5" fill="none" stroke-linejoin="round"/><path d="M7 1.2v3.8h3.8" stroke="#a142f4" stroke-width="1.3" fill="none"/></svg>
<div class="t" style="left:39.9px;top:722.0px;font-size:11px;color:#2b2b2b;transform:scaleX(0.9835);transform-origin:0 0">layout-bundle.css</div>
<svg class="a" style="left:22px;top:737px" width="12" height="15" viewBox="0 0 12 15"><path d="M1.2 1.2h6l3.6 3.6v9H1.2z" stroke="#a142f4" stroke-width="1.5" fill="none" stroke-linejoin="round"/><path d="M7 1.2v3.8h3.8" stroke="#a142f4" stroke-width="1.3" fill="none"/></svg>
<div class="t" style="left:39.9px;top:740.0px;font-size:11px;color:#2b2b2b;transform:scaleX(0.9686);transform-origin:0 0">light.css</div>
<svg class="a" style="left:22px;top:755px" width="12" height="15" viewBox="0 0 12 15"><path d="M1.2 1.2h6l3.6 3.6v9H1.2z" stroke="#a142f4" stroke-width="1.5" fill="none" stroke-linejoin="round"/><path d="M7 1.2v3.8h3.8" stroke="#a142f4" stroke-width="1.3" fill="none"/></svg>
<div class="t" style="left:39.9px;top:758.0px;font-size:11px;color:#2b2b2b;transform:scaleX(0.9825);transform-origin:0 0">ng-bundle.css</div>
<svg class="a" style="left:22px;top:773px" width="12" height="15" viewBox="0 0 12 15"><path d="M1.2 1.2h6l3.6 3.6v9H1.2z" stroke="#a142f4" stroke-width="1.5" fill="none" stroke-linejoin="round"/><path d="M7 1.2v3.8h3.8" stroke="#a142f4" stroke-width="1.3" fill="none"/></svg>
<div class="t" style="left:39.9px;top:776.0px;font-size:11px;color:#2b2b2b;transform:scaleX(0.9744);transform-origin:0 0">ngx-datatable-icons.css</div>
<svg class="a" style="left:22px;top:791px" width="12" height="15" viewBox="0 0 12 15"><path d="M1.2 1.2h6l3.6 3.6v9H1.2z" stroke="#a142f4" stroke-width="1.5" fill="none" stroke-linejoin="round"/><path d="M7 1.2v3.8h3.8" stroke="#a142f4" stroke-width="1.3" fill="none"/></svg>
<div class="t" style="left:39.9px;top:794.0px;font-size:11px;color:#2b2b2b;transform:scaleX(0.9795);transform-origin:0 0">ngx-datatable-index.css</div>
<svg class="a" style="left:22px;top:809px" width="12" height="15" viewBox="0 0 12 15"><path d="M1.2 1.2h6l3.6 3.6v9H1.2z" stroke="#a142f4" stroke-width="1.5" fill="none" stroke-linejoin="round"/><path d="M7 1.2v3.8h3.8" stroke="#a142f4" stroke-width="1.3" fill="none"/></svg>
<div class="t" style="left:39.9px;top:812.0px;font-size:11px;color:#2b2b2b;transform:scaleX(0.9828);transform-origin:0 0">ngx-datatable-material.css</div>
<svg class="a" style="left:22px;top:827px" width="12" height="15" viewBox="0 0 12 15"><path d="M1.2 1.2h6l3.6 3.6v9H1.2z" stroke="#a142f4" stroke-width="1.5" fill="none" stroke-linejoin="round"/><path d="M7 1.2v3.8h3.8" stroke="#a142f4" stroke-width="1.3" fill="none"/></svg>
<div class="t" style="left:39.9px;top:830.0px;font-size:11px;color:#2b2b2b;transform:scaleX(0.9122);transform-origin:0 0">styles.css</div>
<svg class="a" style="left:22px;top:845px" width="12" height="15" viewBox="0 0 12 15"><path d="M1.2 1.2h6l3.6 3.6v9H1.2z" stroke="#1e8e3e" stroke-width="1.5" fill="none" stroke-linejoin="round"/><path d="M7 1.2v3.8h3.8" stroke="#1e8e3e" stroke-width="1.3" fill="none"/></svg>
<div class="t" style="left:39.9px;top:848.0px;font-size:11px;color:#2b2b2b;transform:scaleX(0.9875);transform-origin:0 0">Inter-roman.var.woff2?v=3.19</div>
<svg class="a" style="left:22px;top:863px" width="12" height="15" viewBox="0 0 12 15"><path d="M1.2 1.2h6l3.6 3.6v9H1.2z" stroke="#1e8e3e" stroke-width="1.5" fill="none" stroke-linejoin="round"/><path d="M7 1.2v3.8h3.8" stroke="#1e8e3e" stroke-width="1.3" fill="none"/></svg>
<div class="t" style="left:39.9px;top:866.0px;font-size:11px;color:#2b2b2b;transform:scaleX(0.9775);transform-origin:0 0">bootstrap-icons.woff2?30af91bf14e37666a085fb8a161ff36d</div>
<svg class="a" style="left:22px;top:881px" width="12" height="15" viewBox="0 0 12 15"><path d="M1.2 1.2h6l3.6 3.6v9H1.2z" stroke="#1e8e3e" stroke-width="1.5" fill="none" stroke-linejoin="round"/><path d="M7 1.2v3.8h3.8" stroke="#1e8e3e" stroke-width="1.3" fill="none"/></svg>
<div class="t" style="left:39.9px;top:884.0px;font-size:11px;color:#2b2b2b;transform:scaleX(1.0078);transform-origin:0 0">fa-solid-900.woff2</div>
<svg class="a" style="left:1px;top:900px" width="6" height="8" viewBox="0 0 6 8"><path d="M0.5 0.5v7L5.5 4z" fill="#333"/></svg>
<svg class="a" style="left:8px;top:900px" width="18" height="12" viewBox="0 0 18 12"><path d="M4.5 10.5h9a3.2 3.2 0 0 0 .4-6.4 4.5 4.5 0 0 0-8.6-.6A3.5 3.5 0 0 0 4.5 10.5z" stroke="#555" stroke-width="1.3" fill="none"/></svg>
<div class="t" style="left:29.4px;top:902.0px;font-size:11px;color:#2b2b2b">.</div>
<svg class="a" style="left:1px;top:918px" width="6" height="8" viewBox="0 0 6 8"><path d="M0.5 0.5v7L5.5 4z" fill="#333"/></svg>
<svg class="a" style="left:8px;top:918px" width="18" height="12" viewBox="0 0 18 12"><path d="M4.5 10.5h9a3.2 3.2 0 0 0 .4-6.4 4.5 4.5 0 0 0-8.6-.6A3.5 3.5 0 0 0 4.5 10.5z" stroke="#555" stroke-width="1.3" fill="none"/></svg>
<div class="t" style="left:29.4px;top:921.0px;font-size:11px;color:#2b2b2b;transform:scaleX(0.9731);transform-origin:0 0">Angular DevTools</div>
</div></div>
<div class="a" style="left:376px;top:496px;width:17px;height:441px;background:#f1f1f1"></div>
<div class="a" style="left:378px;top:605px;width:13px;height:176px;background:#c1c1c1"></div>
<svg class="a" style="left:380px;top:501px" width="9" height="6" viewBox="0 0 9 6"><path d="M0.5 5.5L4.5 1l4 4.5z" fill="#505050"/></svg>
<svg class="a" style="left:380px;top:924px" width="9" height="6" viewBox="0 0 9 6"><path d="M0.5 0.5L4.5 5l4-4.5z" fill="#505050"/></svg>
<div class="a" style="left:0px;top:937px;width:376px;height:17px;background:#f1f1f1"></div>
<div class="a" style="left:0px;top:938px;width:333px;height:13px;background:#c1c1c1"></div>
<svg class="a" style="left:365px;top:941px" width="6" height="9" viewBox="0 0 6 9"><path d="M0.5 0.5L5.5 4.5l-5 4z" fill="#505050"/></svg>
<div class="a" style="left:376px;top:936px;width:17px;height:18px;background:#dcdcdc"></div>
<div class="a" style="left:0px;top:954px;width:1899px;height:1px;background:#9eeefa"></div>
<div class="a" style="left:0px;top:955px;width:1899px;height:19px;background:#dbe9ec"></div>
<div class="t" style="left:16.1px;top:962.0px;font-size:11px;color:#2b2b2b;transform:scaleX(0.9738);transform-origin:0 0">Console</div>
<div class="t" style="left:72.5px;top:962.0px;font-size:11px;color:#1b7b89;transform:scaleX(0.9838);transform-origin:0 0">What's new</div>
<div class="t" style="left:155.0px;top:962.0px;font-size:11px;color:#2b2b2b;transform:scaleX(0.9152);transform-origin:0 0">Issues</div>
<div class="t" style="left:211.9px;top:962.0px;font-size:11px;color:#2b2b2b;transform:scaleX(0.9151);transform-origin:0 0">Search</div>
<svg class="a" style="left:134px;top:962px" width="10" height="10" viewBox="0 0 10 10"><path d="M1.5 1.5l7 7M8.5 1.5l-7 7" stroke="#333" stroke-width="1.2"/></svg>
<svg class="a" style="left:1882px;top:961px" width="12" height="12" viewBox="0 0 12 12"><path d="M2 2l9 9M11 2l-9 9" stroke="#333" stroke-width="1.3"/></svg>
<div class="a" style="left:394px;top:496px;width:774px;height:417px;overflow:hidden;background:#f4fafa">
<div class="a" style="left:-394px;top:-496px;width:1899px;height:974px">
<div class="a" style="left:446px;top:541px;width:1px;height:372px;background:#9eeefa"></div>
<div class="a" style="left:446px;top:556px;width:1px;height:0px;background:#9eeefa"></div>
<div class="a" style="left:458px;top:691px;width:1px;height:76px;background:#9eeefa"></div>
<div class="a" style="left:458px;top:827px;width:1px;height:76px;background:#9eeefa"></div>
<div class="a" style="left:470px;top:707px;width:1px;height:30px;background:#4fa9b8"></div>
<div class="a" style="left:470px;top:857px;width:1px;height:30px;background:#9eeefa"></div>
<div class="a" style="left:446px;top:556px;width:1px;height:15px;background:#f4fafa"></div>
<div class="a" style="left:443px;top:676px;width:725px;height:17px;background:#fef3ad;border-top:1px solid #f3c21b;border-bottom:1px solid #f3c21b"></div>
<div class="a" style="left:472px;top:678px;width:47px;height:13px;background:#80d0de"></div>
<div class="a" style="left:518px;top:662px;width:31px;height:14px;background:#fdf3c6;border:1px solid #f0c419"></div>
<div class="a" style="left:659px;top:663px;width:134px;height:13px;background:#fcdcd1"></div>
<div class="t" style="left:420.8px;top:499.0px;font-family:'Liberation Mono',monospace;font-size:11px;color:#a0a0a0;transform:scaleX(0.8985);transform-origin:0 0">7</div>
<div class="t" style="left:420.8px;top:514.0px;font-family:'Liberation Mono',monospace;font-size:11px;color:#3b3b3b;transform:scaleX(0.8985);transform-origin:0 0">8</div>
<div class="t" style="left:447.8px;top:514.0px;font-family:'Liberation Mono',monospace;font-size:11px;white-space:pre;-webkit-text-stroke-width:0.25px;transform:scaleX(0.8985);transform-origin:0 0"><span style="color:#8a8a8a">@</span><span style="color:#1e1e1e">Injectable({ providedIn: </span><span style="color:#b3402c">"root"</span><span style="color:#1e1e1e"> })</span></div>
<div class="t" style="left:420.8px;top:529.0px;font-family:'Liberation Mono',monospace;font-size:11px;color:#3b3b3b;transform:scaleX(0.8985);transform-origin:0 0">9</div>
<div class="t" style="left:447.8px;top:529.0px;font-family:'Liberation Mono',monospace;font-size:11px;white-space:pre;-webkit-text-stroke-width:0.25px;transform:scaleX(0.8985);transform-origin:0 0"><span style="color:#b5004f">export class </span><span style="color:#61709f">MyCustomErrorHandlerService</span></div>
<div class="t" style="left:414.8px;top:545.0px;font-family:'Liberation Mono',monospace;font-size:11px;color:#a0a0a0;transform:scaleX(0.8985);transform-origin:0 0">10</div>
<div class="t" style="left:447.8px;top:545.0px;font-family:'Liberation Mono',monospace;font-size:11px;white-space:pre;-webkit-text-stroke-width:0.25px;transform:scaleX(0.8985);transform-origin:0 0"><span style="color:#b5004f">  implements </span><span style="color:#61709f">CustomHttpErrorHandlerService</span></div>
<div class="t" style="left:414.8px;top:560.0px;font-family:'Liberation Mono',monospace;font-size:11px;color:#3b3b3b;transform:scaleX(0.8985);transform-origin:0 0">11</div>
<div class="t" style="left:447.8px;top:560.0px;font-family:'Liberation Mono',monospace;font-size:11px;white-space:pre;-webkit-text-stroke-width:0.25px;transform:scaleX(0.8985);transform-origin:0 0"><span style="color:#1e1e1e">{</span></div>
<div class="t" style="left:414.8px;top:575.0px;font-family:'Liberation Mono',monospace;font-size:11px;color:#3b3b3b;transform:scaleX(0.8985);transform-origin:0 0">12</div>
<div class="t" style="left:447.8px;top:575.0px;font-family:'Liberation Mono',monospace;font-size:11px;white-space:pre;-webkit-text-stroke-width:0.25px;transform:scaleX(0.8985);transform-origin:0 0"><span style="color:#6b7580">  // You can write any number here, ex: 9999</span></div>
<div class="t" style="left:414.8px;top:590.0px;font-family:'Liberation Mono',monospace;font-size:11px;color:#3b3b3b;transform:scaleX(0.8985);transform-origin:0 0">13</div>
<div class="t" style="left:447.8px;top:590.0px;font-family:'Liberation Mono',monospace;font-size:11px;white-space:pre;-webkit-text-stroke-width:0.25px;transform:scaleX(0.8985);transform-origin:0 0"><span style="color:#b5004f">  readonly </span><span style="color:#1e1e1e">priority = CUSTOM_HTTP_ERROR_HANDLER_PRIORITY.veryHigh;</span></div>
<div class="t" style="left:414.8px;top:605.0px;font-family:'Liberation Mono',monospace;font-size:11px;color:#3b3b3b;transform:scaleX(0.8985);transform-origin:0 0">14</div>
<div class="t" style="left:447.8px;top:605.0px;font-family:'Liberation Mono',monospace;font-size:11px;white-space:pre;-webkit-text-stroke-width:0.25px;transform:scaleX(0.8985);transform-origin:0 0"><span style="color:#b5004f">  protected readonly </span><span style="color:#1e1e1e">toaster = inject(ToasterService);</span></div>
<div class="t" style="left:414.8px;top:620.0px;font-family:'Liberation Mono',monospace;font-size:11px;color:#3b3b3b;transform:scaleX(0.8985);transform-origin:0 0">15</div>
<div class="t" style="left:447.8px;top:620.0px;font-family:'Liberation Mono',monospace;font-size:11px;white-space:pre;-webkit-text-stroke-width:0.25px;transform:scaleX(0.8985);transform-origin:0 0"><span style="color:#b5004f">  private </span><span style="color:#1e1e1e">error: </span><span style="color:#61709f">HttpErrorResponse</span><span style="color:#c79a1a"> | </span><span style="color:#61709f">undefined</span><span style="color:#1e1e1e"> = undefined;</span></div>
<div class="t" style="left:414.8px;top:635.0px;font-family:'Liberation Mono',monospace;font-size:11px;color:#a0a0a0;transform:scaleX(0.8985);transform-origin:0 0">16</div>
<div class="t" style="left:414.8px;top:650.0px;font-family:'Liberation Mono',monospace;font-size:11px;color:#3b3b3b;transform:scaleX(0.8985);transform-origin:0 0">17</div>
<div class="t" style="left:447.8px;top:650.0px;font-family:'Liberation Mono',monospace;font-size:11px;white-space:pre;-webkit-text-stroke-width:0.25px;transform:scaleX(0.8985);transform-origin:0 0"><span style="color:#6b7580">  // What kind of error should be handled by this service? You can decide it in this method. If error is suitable to your case, return true.</span></div>
<div class="t" style="left:414.8px;top:665.0px;font-family:'Liberation Mono',monospace;font-size:11px;color:#3b3b3b;transform:scaleX(0.8985);transform-origin:0 0">18</div>
<div class="t" style="left:447.8px;top:665.0px;font-family:'Liberation Mono',monospace;font-size:11px;white-space:pre;-webkit-text-stroke-width:0.25px;transform:scaleX(0.8985);transform-origin:0 0"><span style="color:#1e1e1e">  canHandle(error: </span><span style="color:#61709f">any</span><span style="color:#1e1e1e">): </span><span style="color:#61709f">boolean</span><span style="color:#1e1e1e"> {</span></div>
<div class="t" style="left:414.8px;top:680.0px;font-family:'Liberation Mono',monospace;font-size:11px;color:#3b3b3b;transform:scaleX(0.8985);transform-origin:0 0">19</div>
<div class="t" style="left:447.8px;top:680.0px;font-family:'Liberation Mono',monospace;font-size:11px;white-space:pre;-webkit-text-stroke-width:0.25px;transform:scaleX(0.8985);transform-origin:0 0"><span style="color:#1e1e1e">    </span><span style="color:#b5004f">debugger</span><span style="color:#1e1e1e">;</span></div>
<div class="t" style="left:414.8px;top:695.0px;font-family:'Liberation Mono',monospace;font-size:11px;color:#3b3b3b;transform:scaleX(0.8985);transform-origin:0 0">20</div>
<div class="t" style="left:447.8px;top:695.0px;font-family:'Liberation Mono',monospace;font-size:11px;white-space:pre;-webkit-text-stroke-width:0.25px;transform:scaleX(0.8985);transform-origin:0 0"><span style="color:#1e1e1e">    </span><span style="color:#b5004f">if</span><span style="color:#1e1e1e"> (error.status === 403) {</span></div>
<div class="t" style="left:414.8px;top:710.0px;font-family:'Liberation Mono',monospace;font-size:11px;color:#3b3b3b;transform:scaleX(0.8985);transform-origin:0 0">21</div>
<div class="t" style="left:447.8px;top:710.0px;font-family:'Liberation Mono',monospace;font-size:11px;white-space:pre;-webkit-text-stroke-width:0.25px;transform:scaleX(0.8985);transform-origin:0 0"><span style="color:#1e1e1e">      </span><span style="color:#b5004f">this</span><span style="color:#1e1e1e">.error = error;</span></div>
<div class="t" style="left:414.8px;top:726.0px;font-family:'Liberation Mono',monospace;font-size:11px;color:#3b3b3b;transform:scaleX(0.8985);transform-origin:0 0">22</div>
<div class="t" style="left:447.8px;top:726.0px;font-family:'Liberation Mono',monospace;font-size:11px;white-space:pre;-webkit-text-stroke-width:0.25px;transform:scaleX(0.8985);transform-origin:0 0"><span style="color:#1e1e1e">      </span><span style="color:#b5004f">return</span><span style="color:#1e1e1e"> true;</span></div>
<div class="t" style="left:414.8px;top:741.0px;font-family:'Liberation Mono',monospace;font-size:11px;color:#a0a0a0;transform:scaleX(0.8985);transform-origin:0 0">23</div>
<div class="t" style="left:447.8px;top:741.0px;font-family:'Liberation Mono',monospace;font-size:11px;white-space:pre;-webkit-text-stroke-width:0.25px;transform:scaleX(0.8985);transform-origin:0 0"><span style="color:#1e1e1e">    }</span></div>
<div class="t" style="left:414.8px;top:756.0px;font-family:'Liberation Mono',monospace;font-size:11px;color:#3b3b3b;transform:scaleX(0.8985);transform-origin:0 0">24</div>
<div class="t" style="left:447.8px;top:756.0px;font-family:'Liberation Mono',monospace;font-size:11px;white-space:pre;-webkit-text-stroke-width:0.25px;transform:scaleX(0.8985);transform-origin:0 0"><span style="color:#1e1e1e">    </span><span style="color:#b5004f">return</span><span style="color:#1e1e1e"> false;</span></div>
<div class="t" style="left:414.8px;top:771.0px;font-family:'Liberation Mono',monospace;font-size:11px;color:#3b3b3b;transform:scaleX(0.8985);transform-origin:0 0">25</div>
<div class="t" style="left:447.8px;top:771.0px;font-family:'Liberation Mono',monospace;font-size:11px;white-space:pre;-webkit-text-stroke-width:0.25px;transform:scaleX(0.8985);transform-origin:0 0"><span style="color:#1e1e1e">  }</span></div>
<div class="t" style="left:414.8px;top:786.0px;font-family:'Liberation Mono',monospace;font-size:11px;color:#a0a0a0;transform:scaleX(0.8985);transform-origin:0 0">26</div>
<div class="t" style="left:414.8px;top:801.0px;font-family:'Liberation Mono',monospace;font-size:11px;color:#3b3b3b;transform:scaleX(0.8985);transform-origin:0 0">27</div>
<div class="t" style="left:447.8px;top:801.0px;font-family:'Liberation Mono',monospace;font-size:11px;white-space:pre;-webkit-text-stroke-width:0.25px;transform:scaleX(0.8985);transform-origin:0 0"><span style="color:#6b7580">  // If this service is picked from ErrorHandler, this execute method will be called.</span></div>
<div class="t" style="left:414.8px;top:816.0px;font-family:'Liberation Mono',monospace;font-size:11px;color:#3b3b3b;transform:scaleX(0.8985);transform-origin:0 0">28</div>
<div class="t" style="left:447.8px;top:816.0px;font-family:'Liberation Mono',monospace;font-size:11px;white-space:pre;-webkit-text-stroke-width:0.25px;transform:scaleX(0.8985);transform-origin:0 0"><span style="color:#1e1e1e">  execute() {</span></div>
<div class="t" style="left:414.8px;top:831.0px;font-family:'Liberation Mono',monospace;font-size:11px;color:#3b3b3b;transform:scaleX(0.8985);transform-origin:0 0">29</div>
<div class="t" style="left:447.8px;top:831.0px;font-family:'Liberation Mono',monospace;font-size:11px;white-space:pre;-webkit-text-stroke-width:0.25px;transform:scaleX(0.8985);transform-origin:0 0"><span style="color:#1e1e1e">    </span><span style="color:#b5004f">debugger</span><span style="color:#1e1e1e">;</span></div>
<div class="t" style="left:414.8px;top:846.0px;font-family:'Liberation Mono',monospace;font-size:11px;color:#3b3b3b;transform:scaleX(0.8985);transform-origin:0 0">30</div>
<div class="t" style="left:447.8px;top:846.0px;font-family:'Liberation Mono',monospace;font-size:11px;white-space:pre;-webkit-text-stroke-width:0.25px;transform:scaleX(0.8985);transform-origin:0 0"><span style="color:#1e1e1e">    </span><span style="color:#b5004f">this</span><span style="color:#1e1e1e">.toaster.error(</span></div>
<div class="t" style="left:414.8px;top:861.0px;font-family:'Liberation Mono',monospace;font-size:11px;color:#3b3b3b;transform:scaleX(0.8985);transform-origin:0 0">31</div>
<div class="t" style="left:447.8px;top:861.0px;font-family:'Liberation Mono',monospace;font-size:11px;white-space:pre;-webkit-text-stroke-width:0.25px;transform:scaleX(0.8985);transform-origin:0 0"><span style="color:#1e1e1e">      </span><span style="color:#b5004f">this</span><span style="color:#1e1e1e">.error.error.message || this.localize("Forbid)</span><span style="color:#1e1e1e">,</span></div>
<div class="t" style="left:414.8px;top:876.0px;font-family:'Liberation Mono',monospace;font-size:11px;color:#3b3b3b;transform:scaleX(0.8985);transform-origin:0 0">32</div>
<div class="t" style="left:447.8px;top:876.0px;font-family:'Liberation Mono',monospace;font-size:11px;white-space:pre;-webkit-text-stroke-width:0.25px;transform:scaleX(0.8985);transform-origin:0 0"><span style="color:#1e1e1e">      </span><span style="color:#b3402c">"400"</span><span style="color:#1e1e1e">,</span></div>
<div class="t" style="left:414.8px;top:891.0px;font-family:'Liberation Mono',monospace;font-size:11px;color:#3b3b3b;transform:scaleX(0.8985);transform-origin:0 0">33</div>
<div class="t" style="left:447.8px;top:891.0px;font-family:'Liberation Mono',monospace;font-size:11px;white-space:pre;-webkit-text-stroke-width:0.25px;transform:scaleX(0.8985);transform-origin:0 0"><span style="color:#1e1e1e">    );</span></div>
<div class="t" style="left:414.8px;top:906.0px;font-family:'Liberation Mono',monospace;font-size:11px;color:#3b3b3b;transform:scaleX(0.8985);transform-origin:0 0">34</div>
<div class="t" style="left:447.8px;top:906.0px;font-family:'Liberation Mono',monospace;font-size:11px;white-space:pre;-webkit-text-stroke-width:0.25px;transform:scaleX(0.8985);transform-origin:0 0"><span style="color:#1e1e1e">  }</span></div>
<div class="t" style="left:664.5px;top:665.0px;font-family:'Liberation Mono',monospace;font-size:11px;white-space:pre;color:#7a6f6c;transform:scaleX(0.8985);transform-origin:0 0">error = {status: 403}</div>
<div class="a" style="left:511px;top:682px;width:270px;height:225px;background:#f4fafa;border-radius:4px;box-shadow:0 1px 4px rgba(0,0,0,0.35)"></div>
<svg class="a" style="left:527px;top:675px" width="16" height="8" viewBox="0 0 16 8"><path d="M0 8L8 0l8 8z" fill="#f4fafa"/><path d="M0.5 8L8 0.8 15.5 8" stroke="rgba(0,0,0,0.12)" stroke-width="1" fill="none"/></svg>
<div class="t" style="left:533px;top:687.7px;font-family:'Liberation Mono',monospace;font-size:11px;white-space:pre;color:#222;transform:scaleX(0.8985);transform-origin:0 0">Object</div>
<div class="a" style="left:517px;top:700px;width:257px;height:1px;background:#8fdff0"></div>
<div class="t" style="left:532px;top:704.5px;font-family:'Liberation Mono',monospace;font-size:11px;white-space:pre;transform:scaleX(0.8985);transform-origin:0 0"><span style="color:#9b1458">status</span><span style="color:#333">: </span><span style="color:#1e6273">403</span></div>
<svg class="a" style="left:521px;top:719px" width="7" height="8" viewBox="0 0 7 8"><path d="M0.5 0.5v7L6 4z" fill="#333"/></svg>
<div class="t" style="left:532px;top:719.0px;font-family:'Liberation Mono',monospace;font-size:11px;white-space:pre;transform:scaleX(0.8985);transform-origin:0 0"><span style="color:#8a8a8a">[[Prototype]]</span><span style="color:#333">: Object</span></div>
</div></div>
<div class="a" style="left:1168px;top:496px;width:17px;height:417px;background:#f1f1f1"></div>
<div class="a" style="left:1170px;top:552px;width:13px;height:171px;background:#c1c1c1"></div>
<svg class="a" style="left:1173px;top:502px" width="9" height="6" viewBox="0 0 9 6"><path d="M0.5 5.5L4.5 1l4 4.5z" fill="#505050"/></svg>
<svg class="a" style="left:1173px;top:900px" width="9" height="6" viewBox="0 0 9 6"><path d="M0.5 0.5L4.5 5l4-4.5z" fill="#505050"/></svg>
<div class="a" style="left:394px;top:913px;width:774px;height:16px;background:#f1f1f1"></div>
<div class="a" style="left:411px;top:915px;width:544px;height:13px;background:#c1c1c1"></div>
<svg class="a" style="left:399px;top:917px" width="6" height="9" viewBox="0 0 6 9"><path d="M5.5 0.5L0.5 4.5l5 4z" fill="#a0a0a0"/></svg>
<svg class="a" style="left:1157px;top:917px" width="6" height="9" viewBox="0 0 6 9"><path d="M0.5 0.5L5.5 4.5l-5 4z" fill="#505050"/></svg>
<div class="a" style="left:1168px;top:913px;width:18px;height:16px;background:#dcdcdc"></div>
<div class="a" style="left:394px;top:929px;width:792px;height:1px;background:#9eeefa"></div>
<div class="t" style="left:400.1px;top:936.7px;font-size:11px;color:#333;transform:scaleX(0.9591);transform-origin:0 0">Line 22, Column 19</div>
<div class="t" style="left:1035.8px;top:937.2px;font-size:11px;color:#333;transform:scaleX(0.9653);transform-origin:0 0">(From <u>main.js</u>) Coverage: n/a</div>
<div class="a" style="left:1187px;top:496px;width:712px;height:32px;background:#f4fafa"></div>
<div class="a" style="left:1485px;top:501px;width:120px;height:22px;border-radius:11px;background:#fcefa8"></div>
<svg class="a" style="left:1494px;top:505px" width="13" height="13" viewBox="0 0 13 13"><circle cx="6.5" cy="6.5" r="5.6" stroke="#333" stroke-width="1.1" fill="none"/><path d="M6.5 5.7v4" stroke="#333" stroke-width="1.2"/><circle cx="6.5" cy="3.8" r="0.75" fill="#333"/></svg>
<div class="t" style="left:1510.6px;top:506.8px;font-size:11px;color:#222;transform:scaleX(0.9752);transform-origin:0 0">Debugger paused</div>
<div class="a" style="left:1187px;top:528px;width:712px;height:39px;background:#e3eff1"></div>
<svg class="a" style="left:1196px;top:535px" width="6" height="8" viewBox="0 0 6 8"><path d="M0.5 0.5v7L5.5 4z" fill="#333"/></svg>
<div class="t" style="left:1206.1px;top:533.3px;font-size:11px;color:#2b2b2b;transform:scaleX(0.9654);transform-origin:0 0">Watch</div>
<svg class="a" style="left:1195px;top:555px" width="8" height="6" viewBox="0 0 8 6"><path d="M0.5 0.5h7L4 5.5z" fill="#333"/></svg>
<div class="t" style="left:1206.1px;top:552.9px;font-size:11px;color:#2b2b2b;transform:scaleX(0.9640);transform-origin:0 0">Breakpoints</div>
<div class="a" style="left:1187px;top:567px;width:712px;height:1px;background:#9eeefa"></div>
<div class="a" style="left:1192px;top:573px;width:11px;height:11px;background:#fff;border:1px solid #777;border-radius:2px"></div>
<div class="t" style="left:1208.2px;top:573.9px;font-size:11px;color:#2b2b2b;transform:scaleX(0.9651);transform-origin:0 0">Pause on uncaught exceptions</div>
<div class="a" style="left:1192px;top:590px;width:11px;height:11px;background:#fff;border:1px solid #777;border-radius:2px"></div>
<div class="t" style="left:1208.2px;top:590.0px;font-size:11px;color:#2b2b2b;transform:scaleX(0.9615);transform-origin:0 0">Pause on caught exceptions</div>
<div class="a" style="left:1187px;top:606px;width:712px;height:19px;background:#e3eff1"></div>
<svg class="a" style="left:1195px;top:613px" width="8" height="6" viewBox="0 0 8 6"><path d="M0.5 0.5h7L4 5.5z" fill="#333"/></svg>
<div class="t" style="left:1206.1px;top:610.8px;font-size:11px;color:#2b2b2b;transform:scaleX(0.9358);transform-origin:0 0">Scope</div>
<div class="a" style="left:1187px;top:625px;width:712px;height:1px;background:#9eeefa"></div>
<svg class="a" style="left:1195px;top:633px" width="8" height="6" viewBox="0 0 8 6"><path d="M0.5 0.5h7L4 5.5z" fill="#333"/></svg>
<div class="t" style="left:1205.0px;top:630.9px;font-family:'Liberation Mono',monospace;font-size:11px;white-space:pre;color:#222;transform:scaleX(0.8985);transform-origin:0 0">Local</div>
<svg class="a" style="left:1202px;top:647px" width="6" height="8" viewBox="0 0 6 8"><path d="M0.5 0.5v7L5.5 4z" fill="#333"/></svg>
<div class="t" style="left:1212.6px;top:645.9px;font-family:'Liberation Mono',monospace;font-size:11px;white-space:pre;color:#222;transform:scaleX(0.8985);transform-origin:0 0"><span style="color:#8d8d8d">this</span><span style="color:#333">: </span><span style="color:#2a2a2a">MyCustomErrorHandlerService</span></div>
<svg class="a" style="left:1202px;top:661px" width="6" height="8" viewBox="0 0 6 8"><path d="M0.5 0.5v7L5.5 4z" fill="#333"/></svg>
<div class="t" style="left:1212.6px;top:659.7px;font-family:'Liberation Mono',monospace;font-size:11px;white-space:pre;color:#222;transform:scaleX(0.8985);transform-origin:0 0"><span style="color:#8f1a52">error</span><span style="color:#333">: {</span><span style="color:#8d8d8d">status</span><span style="color:#333">: </span><span style="color:#1e6273">403</span><span style="color:#333">}</span></div>
<svg class="a" style="left:1195px;top:677px" width="6" height="8" viewBox="0 0 6 8"><path d="M0.5 0.5v7L5.5 4z" fill="#333"/></svg>
<div class="t" style="left:1205.0px;top:675.8px;font-family:'Liberation Mono',monospace;font-size:11px;white-space:pre;color:#222;transform:scaleX(0.8985);transform-origin:0 0">Block</div>
<svg class="a" style="left:1195px;top:694px" width="6" height="8" viewBox="0 0 6 8"><path d="M0.5 0.5v7L5.5 4z" fill="#333"/></svg>
<div class="t" style="left:1205.0px;top:692.8px;font-family:'Liberation Mono',monospace;font-size:11px;white-space:pre;color:#222;transform:scaleX(0.8985);transform-origin:0 0">Closure (2864)</div>
<svg class="a" style="left:1195px;top:710px" width="6" height="8" viewBox="0 0 6 8"><path d="M0.5 0.5v7L5.5 4z" fill="#333"/></svg>
<div class="t" style="left:1205.0px;top:709.4px;font-family:'Liberation Mono',monospace;font-size:11px;white-space:pre;color:#222;transform:scaleX(0.8985);transform-origin:0 0">Global</div>
<div class="t" style="left:1863.7px;top:709.0px;font-family:'Liberation Mono',monospace;font-size:11px;white-space:pre;color:#222;transform:scaleX(0.8985);transform-origin:0 0">Window</div>
<div class="a" style="left:1187px;top:722px;width:712px;height:19px;background:#e3eff1"></div>
<svg class="a" style="left:1195px;top:729px" width="8" height="6" viewBox="0 0 8 6"><path d="M0.5 0.5h7L4 5.5z" fill="#333"/></svg>
<div class="t" style="left:1205.7px;top:726.6px;font-size:11px;color:#2b2b2b;transform:scaleX(0.9206);transform-origin:0 0">Call Stack</div>
<div class="a" style="left:1187px;top:741px;width:712px;height:1px;background:#9eeefa"></div>
<div class="a" style="left:1191px;top:746px;width:11px;height:11px;background:#fff;border:1px solid #777;border-radius:2px"></div>
<div class="t" style="left:1205.7px;top:746.8px;font-size:11px;color:#7a7a7a;transform:scaleX(0.9821);transform-origin:0 0">Show ignore-listed frames</div>
<div class="a" style="left:1187px;top:761px;width:712px;height:1px;background:#9eeefa"></div>
<svg class="a" style="left:1192px;top:767px" width="9" height="9" viewBox="0 0 9 9"><path d="M0.5 2.5h4V0.3L8.7 4.5 4.5 8.7V6.5h-4z" fill="#1b7b89"/></svg>
<div class="t" style="left:1204.9px;top:767.1px;font-size:11px;color:#2b2b2b;transform:scaleX(0.9621);transform-origin:0 0">canHandle</div>
<div class="t" style="left:1736.1px;top:767.0px;font-size:11px;color:#7a7a7a;transform:scaleX(0.9790);transform-origin:0 0">my-custom-error...-service.ts:19</div>
<div class="a" style="left:1187px;top:791px;width:14px;height:1px;background:#9eeefa"></div>
<div class="a" style="left:1351px;top:791px;width:548px;height:1px;background:#9eeefa"></div>
<div class="t" style="left:1204.9px;top:785.8px;font-size:11px;color:#1a1a1a;font-weight:bold;transform:scaleX(0.9626);transform-origin:0 0">Zone - Promise.then (async)</div>
<div class="a" style="left:1187px;top:800px;width:712px;height:1px;background:#9eeefa"></div>
<div class="t" style="left:1204.9px;top:805.5px;font-size:11px;color:#2b2b2b;transform:scaleX(0.9672);transform-origin:0 0">(anonymous)</div>
<div class="t" style="left:1733.5px;top:805.8px;font-size:11px;color:#7a7a7a;transform:scaleX(0.9363);transform-origin:0 0">default-node_mo..._saas_mjs.js:2</div>
<div class="a" style="left:1187px;top:820px;width:712px;height:98px;background:#e3eff1"></div>
<svg class="a" style="left:1196px;top:826px" width="6" height="8" viewBox="0 0 6 8"><path d="M0.5 0.5v7L5.5 4z" fill="#333"/></svg>
<div class="t" style="left:1205.5px;top:825.0px;font-size:11px;color:#2b2b2b;transform:scaleX(0.9687);transform-origin:0 0">XHR/fetch Breakpoints</div>
<svg class="a" style="left:1196px;top:844px" width="6" height="8" viewBox="0 0 6 8"><path d="M0.5 0.5v7L5.5 4z" fill="#333"/></svg>
<div class="t" style="left:1205.5px;top:843.8px;font-size:11px;color:#2b2b2b;transform:scaleX(0.9768);transform-origin:0 0">DOM Breakpoints</div>
<svg class="a" style="left:1196px;top:865px" width="6" height="8" viewBox="0 0 6 8"><path d="M0.5 0.5v7L5.5 4z" fill="#333"/></svg>
<div class="t" style="left:1205.5px;top:864.0px;font-size:11px;color:#2b2b2b;transform:scaleX(0.9560);transform-origin:0 0">Global Listeners</div>
<svg class="a" style="left:1196px;top:884px" width="6" height="8" viewBox="0 0 6 8"><path d="M0.5 0.5v7L5.5 4z" fill="#333"/></svg>
<div class="t" style="left:1205.5px;top:883.8px;font-size:11px;color:#2b2b2b;transform:scaleX(0.9576);transform-origin:0 0">Event Listener Breakpoints</div>
<svg class="a" style="left:1196px;top:904px" width="6" height="8" viewBox="0 0 6 8"><path d="M0.5 0.5v7L5.5 4z" fill="#333"/></svg>
<div class="t" style="left:1205.5px;top:903.8px;font-size:11px;color:#2b2b2b;transform:scaleX(0.9609);transform-origin:0 0">CSP Violation Breakpoints</div>
</body></html>
